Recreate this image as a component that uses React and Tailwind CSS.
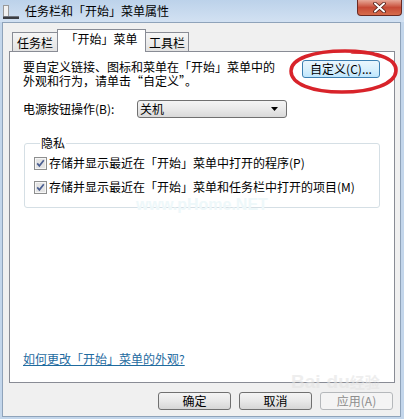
import React from "react";

const FONT = "font-['Noto_Sans_CJK_SC','Noto_Sans',sans-serif]";

const CheckBox = () => (
  <svg width="13" height="13" viewBox="0 0 13 13" className="shrink-0">
    <rect x="0.5" y="0.5" width="12" height="12" fill="#f6f6f6" stroke="#8e8f8f" />
    <rect x="2" y="2" width="9" height="9" fill="#e4e4e4" />
    <path d="M3.2 6.4 L5.4 8.9 L9.8 3.3" fill="none" stroke="#4b5f92" strokeWidth="1.7" />
  </svg>
);

const WinButton = ({ children, disabled, className = "" }) => (
  <div
    className={
      "h-[18px] rounded-[3px] border flex items-center justify-center text-[12px] leading-[14px] " +
      (disabled
        ? "border-[#b5b8bb] bg-[#f4f4f4] text-[#8d8d8d] "
        : "border-[#707070] bg-linear-to-b from-[#f4f4f4] via-[#e8e8e8] to-[#d6d6d6] text-black ") +
      className
    }
  >
    {children}
  </div>
);

const Tab = ({ label, active, className = "" }) =>
  active ? (
    <div
      className={
        "relative z-10 -mb-px h-[23px] border border-b-0 border-[#898c95] bg-white flex justify-center pt-[2px] text-[12px] leading-[14px] " +
        className
      }
    >
      {label}
    </div>
  ) : (
    <div
      className={
        "h-[19px] border border-b-0 border-[#898c95] bg-linear-to-b from-[#f6f6f6] to-[#e3e3e3] flex justify-center pt-[3px] text-[12px] leading-[14px] " +
        className
      }
    >
      {label}
    </div>
  );

export default function App() {
  return (
    <div className={"relative w-[404px] h-[419px] overflow-hidden flex flex-col bg-[#c3d6eb] text-black " + FONT}>
      {/* title bar */}
      <div className="h-[22px] shrink-0 flex items-center bg-linear-to-b from-[#bcd2ea] to-[#d2e1f2]">
        <svg width="16" height="16" viewBox="0 0 16 16" className="ml-[3px] mt-[2px]">
          <rect x="0.5" y="1.5" width="5" height="11" fill="#f2f2f2" stroke="#9a9a9a" />
          <rect x="0" y="12" width="16" height="3" fill="#3b3e44" />
          <rect x="0" y="12" width="16" height="1" fill="#70757e" />
        </svg>
        <span className="ml-[6px] text-[12px] leading-[14px]">任务栏和「开始」菜单属性</span>
        <div className="ml-auto mr-[2px] self-start h-[16px] w-[45px] rounded-b-[4px] border border-t-0 border-[#6a2a22] bg-linear-to-b from-[#e6a898] via-[#c64a36] to-[#d66c4c] flex items-center justify-center">
          <svg width="13" height="11" viewBox="0 0 13 11">
            <path d="M2 1.5 L11 9.5 M11 1.5 L2 9.5" stroke="#4a1a14" strokeWidth="3.6" strokeLinecap="round" />
            <path d="M2 1.5 L11 9.5 M11 1.5 L2 9.5" stroke="#ffffff" strokeWidth="2" strokeLinecap="round" />
          </svg>
        </div>
      </div>

      {/* client */}
      <div className="flex-1 ml-[2px] mr-[3px] mb-[2px] border border-[#8fa3ba] bg-[#f0f0f0] flex flex-col pt-[6px] pl-[6px] pr-[5px]">
        <div className="flex items-end h-[22px] pl-[3px]">
          <Tab label="任务栏" className="w-[46px]" />
          <Tab label="「开始」菜单" active className="w-[89px] -ml-px -mr-px" />
          <Tab label="工具栏" className="w-[44px]" />
        </div>

        <div className="h-[332px] border border-[#898c95] bg-white flex flex-col pt-[8px] pl-[13px] pr-[14px]">
          <div className="flex items-start justify-between">
            <div className="text-[12px] leading-[14px]">
              <div>要自定义链接、图标和菜单在「开始」菜单中的</div>
              <div>外观和行为，请单击“自定义”。</div>
            </div>
            <div className="h-[18px] w-[78px] rounded-[3px] border border-[#3c7fb1] bg-linear-to-b from-[#eaf6fd] via-[#d9f0fc] to-[#bee6fd] flex items-center justify-center text-[12px] leading-[14px]">
              自定义(C)...
            </div>
          </div>

          <div className="mt-[12px] flex items-center">
            <div className="w-[114px] text-[12px] leading-[14px]">电源按钮操作(B):</div>
            <div className="h-[18px] w-[150px] rounded-[3px] border border-[#707070] bg-linear-to-b from-[#f4f4f4] via-[#e9e9e9] to-[#d9d9d9] flex items-center pl-[2px] pr-[8px] text-[12px] leading-[14px]">
              <span>关机</span>
              <svg width="7" height="4" viewBox="0 0 7 4" className="ml-auto">
                <path d="M0 0 L7 0 L3.5 4 Z" fill="#000" />
              </svg>
            </div>
          </div>

          <fieldset className="relative mt-[19px] ml-px rounded-[3px] border border-[#d5dfe5] pl-[9px] pb-[13px]">
            <legend className="ml-[6px] px-px text-[12px] leading-[12px]">隐私</legend>
            <div className="mt-[7px] flex items-center gap-[2px] text-[12px] leading-[14px]">
              <CheckBox />
              <span>存储并显示最近在「开始」菜单中打开的程序(P)</span>
            </div>
            <div className="mt-[10px] flex items-center gap-[2px] text-[12px] leading-[14px]">
              <CheckBox />
              <span>存储并显示最近在「开始」菜单和任务栏中打开的项目(M)</span>
            </div>
            <div className="absolute left-[111px] top-[48px] font-['Liberation_Sans',sans-serif] font-bold text-[16px] leading-[16px] text-[#eef8fa]">
              www.pHome.NET
            </div>
          </fieldset>

          <div className="mt-auto mb-[16px] text-[12px] leading-[14px] text-[#1f6b9f] underline underline-offset-[1px]">
            如何更改「开始」菜单的外观?
          </div>
        </div>

        <div className="mt-[9px] flex justify-end gap-[8px] pr-[2px]">
          <WinButton className="w-[73px]">确定</WinButton>
          <WinButton className="w-[73px]">取消</WinButton>
          <WinButton disabled className="w-[73px]">应用(A)</WinButton>
        </div>
      </div>

      {/* Baidu watermark */}
      <div className="absolute left-[291px] top-[372px] flex items-end text-[#e4e4e4] font-['Liberation_Sans',sans-serif] font-bold text-[19px] leading-[20px] opacity-60">
        <span>Bai</span>
        <span className="ml-[6px]">du</span>
        <span className={"text-[15px] " + FONT}>经验</span>
      </div>

      {/* red hand-drawn ellipse */}
      <svg className="absolute left-0 top-0 pointer-events-none" width="404" height="419">
        <path
          d="M352 52 C380 52 397 60 396 71 C395 84 372 92 342 92 C312 92 291 84 291 71 C291 59 312 51 345 51 C360 51 372 53 380 56"
          fill="none"
          stroke="#d8232a"
          strokeWidth="3.5"
          strokeLinecap="round"
        />
      </svg>
    </div>
  );
}
